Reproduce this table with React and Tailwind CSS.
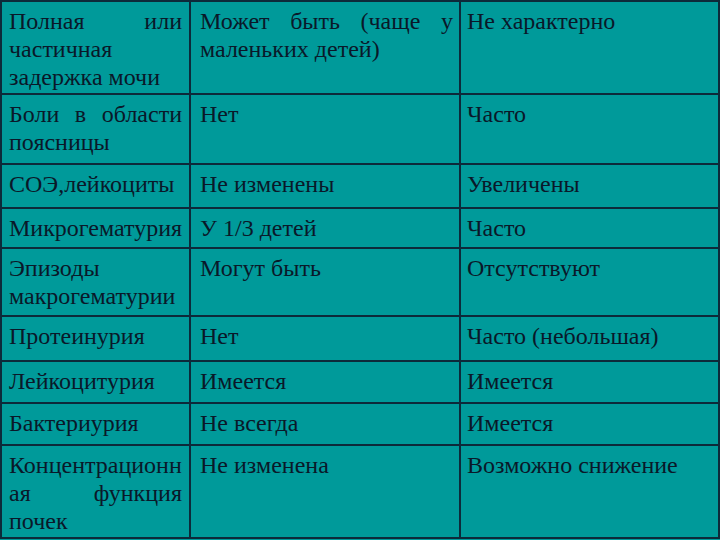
import React from "react";

// each cell: list of lines; j = justify line (words spread over width)
const rows = [
  {
    h: 93,
    cells: [
      [{ t: "Полная или", j: true }, { t: "частичная" }, { t: "задержка мочи" }],
      [{ t: "Может быть (чаще у", j: true }, { t: "маленьких детей)" }],
      [{ t: "Не характерно" }],
    ],
  },
  {
    h: 70,
    cells: [
      [{ t: "Боли в области", j: true }, { t: "поясницы" }],
      [{ t: "Нет" }],
      [{ t: "Часто" }],
    ],
  },
  { h: 44, cells: [[{ t: "СОЭ,лейкоциты" }], [{ t: "Не изменены" }], [{ t: "Увеличены" }]] },
  { h: 40, cells: [[{ t: "Микрогематурия" }], [{ t: "У 1/3 детей" }], [{ t: "Часто" }]] },
  {
    h: 68,
    cells: [
      [{ t: "Эпизоды" }, { t: "макрогематурии" }],
      [{ t: "Могут быть" }],
      [{ t: "Отсутствуют" }],
    ],
  },
  { h: 45, cells: [[{ t: "Протеинурия" }], [{ t: "Нет" }], [{ t: "Часто (небольшая)" }]] },
  { h: 42, cells: [[{ t: "Лейкоцитурия" }], [{ t: "Имеется" }], [{ t: "Имеется" }]] },
  { h: 42, cells: [[{ t: "Бактериурия" }], [{ t: "Не всегда" }], [{ t: "Имеется" }]] },
  {
    h: 93,
    cells: [
      [{ t: "Концентрационн" }, { t: "ая функция", j: true }, { t: "почек" }],
      [{ t: "Не изменена" }],
      [{ t: "Возможно снижение" }],
    ],
  },
];

const Line = ({ line }) =>
  line.j ? (
    <div className="flex justify-between">
      {line.t.split(" ").map((w, i) => (
        <span key={i}>{w}</span>
      ))}
    </div>
  ) : (
    <div className="whitespace-nowrap">{line.t}</div>
  );

export default function App() {
  return (
    <div
      className="w-[720px] h-[540px] bg-[#009a9a] overflow-hidden text-[#0a1829] text-[24px] leading-[28px]"
      style={{ fontFamily: '"Liberation Serif", "Times New Roman", serif' }}
    >
      <table className="w-[718px] table-fixed border-collapse border-2 border-[#0d2a3a]">
        <colgroup>
          <col className="w-[189px]" />
          <col className="w-[270px]" />
          <col className="w-[259px]" />
        </colgroup>
        <tbody>
          {rows.map((row, ri) => (
            <tr key={ri} style={{ height: row.h }}>
              {row.cells.map((cell, ci) => (
                <td
                  key={ci}
                  className={`align-top border-2 border-[#0d2a3a] pt-[5px] ${
                    ci === 0 ? "pl-[7px] pr-[7px]" : ci === 1 ? "pl-[9px] pr-[6px]" : "pl-[6px] pr-[6px]"
                  }`}
                >
                  {cell.map((line, li) => (
                    <Line key={li} line={line} />
                  ))}
                </td>
              ))}
            </tr>
          ))}
        </tbody>
      </table>
    </div>
  );
}
